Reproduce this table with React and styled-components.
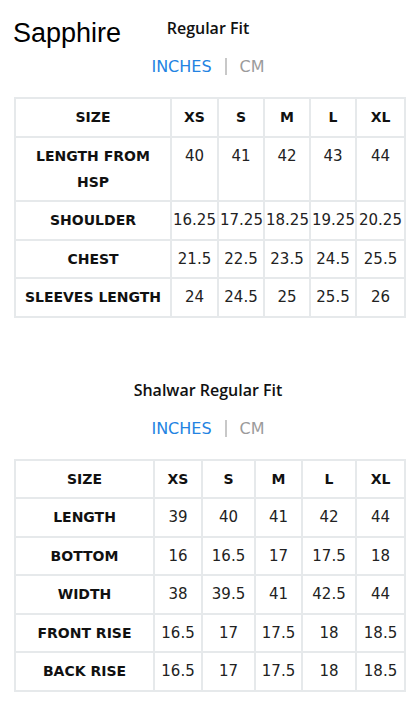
import React from 'react';
import styled, { createGlobalStyle } from 'styled-components';

const GlobalStyle = createGlobalStyle`
  body {
    margin: 0;
    background: #ffffff;
    font-family: 'DejaVu Sans', sans-serif;
    color: #111;
  }
`;

const Page = styled.div`
  width: 416px;
  padding-bottom: 30px;
`;

const Header = styled.header`
  display: grid;
  grid-template-columns: 1fr auto 1fr;
  align-items: start;
`;

const Brand = styled.div`
  padding: 18px 0 0 13px;
  font-family: 'Liberation Sans', Arial, sans-serif;
  font-size: 27px;
  color: #000;
`;

const SectionHead = styled.div`
  display: flex;
  flex-direction: column;
  align-items: center;
  margin-top: ${p => p.$top}px;
`;

const Title = styled.h2`
  margin: 0;
  font-family: 'Open Sans', sans-serif;
  font-size: 16px;
  line-height: 18px;
  font-weight: 600;
  color: #111;
`;

const Units = styled.div`
  margin-top: 20px;
  display: flex;
  align-items: center;
  gap: 13px;
  font-size: 16px;
  line-height: 19px;
`;

const Unit = styled.span`
  color: ${p => (p.$active ? '#2383e2' : '#9b9b9b')};
`;

const Divider = styled.span`
  width: 2px;
  height: 17px;
  background: #c8c8c8;
`;

const Table = styled.table`
  margin: 21px 0 0 14px;
  width: 390px;
  table-layout: fixed;
  border-collapse: collapse;
`;

const Cell = styled.td`
  border: 2px solid #e6e9eb;
  padding: 5px ${p => (p.$label ? 7 : 1)}px 5.5px;
  line-height: 26px;
  text-align: center;
  vertical-align: top;
  font-size: ${p => (p.$bold ? 14 : 15)}px;
  font-weight: ${p => (p.$bold ? 'bold' : 'normal')};
  color: ${p => (p.$bold ? '#111' : '#222')};
  white-space: ${p => (p.$label ? 'normal' : 'nowrap')};
`;

const UnitToggle = () => (
  <Units>
    <Unit $active>INCHES</Unit>
    <Divider />
    <Unit>CM</Unit>
  </Units>
);

const SizeTable = ({ widths, rows }) => (
  <Table>
    <colgroup>
      {widths.map((w, i) => (
        <col key={i} style={{ width: w }} />
      ))}
    </colgroup>
    <tbody>
      <tr>
        {['SIZE', 'XS', 'S', 'M', 'L', 'XL'].map(h => (
          <Cell key={h} as="th" $bold>{h}</Cell>
        ))}
      </tr>
      {rows.map(([label, ...vals]) => (
        <tr key={label}>
          <Cell $bold $label>{label}</Cell>
          {vals.map((v, i) => (
            <Cell key={i}>{v}</Cell>
          ))}
        </tr>
      ))}
    </tbody>
  </Table>
);

const kurta = [
  ['LENGTH FROM HSP', '40', '41', '42', '43', '44'],
  ['SHOULDER', '16.25', '17.25', '18.25', '19.25', '20.25'],
  ['CHEST', '21.5', '22.5', '23.5', '24.5', '25.5'],
  ['SLEEVES LENGTH', '24', '24.5', '25', '25.5', '26'],
];

const shalwar = [
  ['LENGTH', '39', '40', '41', '42', '44'],
  ['BOTTOM', '16', '16.5', '17', '17.5', '18'],
  ['WIDTH', '38', '39.5', '41', '42.5', '44'],
  ['FRONT RISE', '16.5', '17', '17.5', '18', '18.5'],
  ['BACK RISE', '16.5', '17', '17.5', '18', '18.5'],
];

export default function App() {
  return (
    <Page>
      <GlobalStyle />
      <Header>
        <Brand>Sapphire</Brand>
        <SectionHead $top={19}>
          <Title>Regular Fit</Title>
          <UnitToggle />
        </SectionHead>
      </Header>
      <SizeTable widths={[156, 47, 46, 46, 46, 49]} rows={kurta} />

      <SectionHead $top={63}>
        <Title>Shalwar Regular Fit</Title>
        <UnitToggle />
      </SectionHead>
      <SizeTable widths={[139, 48, 53, 47, 54, 49]} rows={shalwar} />
    </Page>
  );
}
